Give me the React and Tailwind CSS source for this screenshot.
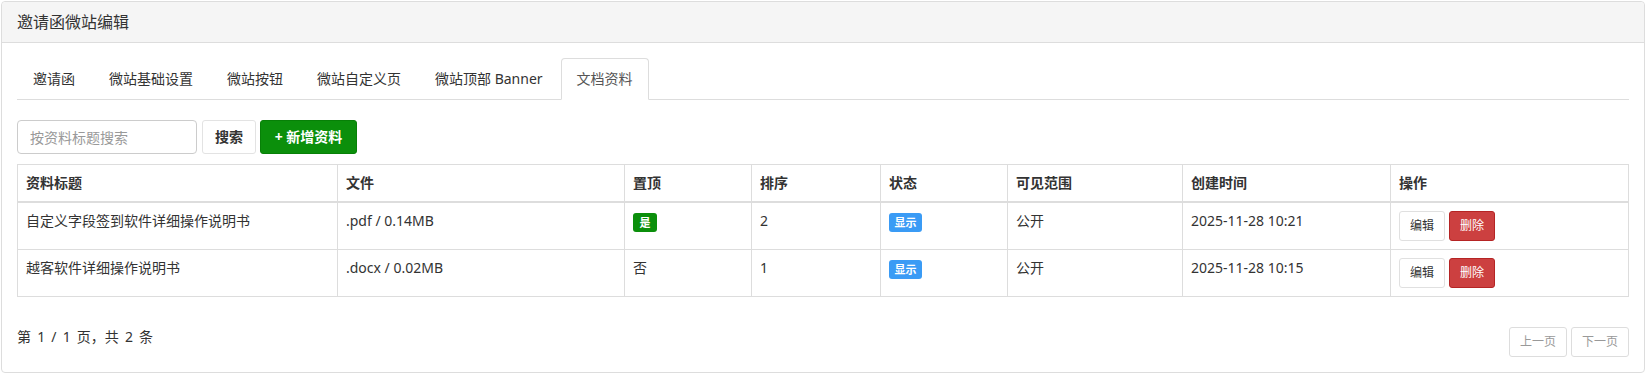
export default function App() {
  const tabs = ["邀请函", "微站基础设置", "微站按钮", "微站自定义页", "微站顶部 Banner", "文档资料"];
  const rows = [
    { title: "自定义字段签到软件详细操作说明书", file: ".pdf / 0.14MB", top: true, order: "2", scope: "公开", time: "2025-11-28 10:21" },
    { title: "越客软件详细操作说明书", file: ".docx / 0.02MB", top: false, order: "1", scope: "公开", time: "2025-11-28 10:15" },
  ];
  const heads = ["资料标题", "文件", "置顶", "排序", "状态", "可见范围", "创建时间", "操作"];
  const td = "border border-[#dddddd] p-2 align-top leading-5";
  return (
    <div className="pl-px pt-px bg-white font-['Noto_Sans','Noto_Sans_CJK_SC',sans-serif] text-sm text-[#333333]">
      <div className="w-[1644px] border border-[#dddddd] rounded bg-white">
        <div className="bg-[#f5f5f5] border-b border-[#dddddd] px-[15px] py-[10px] rounded-t">
          <h3 className="text-base leading-5 text-[#333333]">邀请函微站编辑</h3>
        </div>
        <div className="p-[15px]">
          <ul className="flex border-b border-[#dddddd]">
            {tabs.map((t, i) => (
              <li key={t} className="-mb-px mr-[2px]">
                <a
                  className={
                    i === tabs.length - 1
                      ? "block px-[15px] py-[10px] leading-5 border border-[#dddddd] border-b-transparent rounded-t bg-white text-[#555555]"
                      : "block px-[15px] py-[10px] leading-5 border border-transparent rounded-t text-[#333333]"
                  }
                >
                  {t}
                </a>
              </li>
            ))}
          </ul>

          <div className="mt-5 flex items-center">
            <input
              className="w-[180px] h-[34px] px-3 border border-[#cccccc] rounded text-sm placeholder:text-[#999999] outline-none"
              placeholder="按资料标题搜索"
            />
            <button className="ml-[5px] h-[34px] w-[54px] border border-[#e3e3e3] rounded-[3px] bg-white text-[#333333] font-bold leading-5">
              搜索
            </button>
            <button className="ml-1 h-[34px] w-[97px] border border-[#078007] rounded-[3px] bg-[#0b8f0b] text-white font-bold leading-5">
              + 新增资料
            </button>
          </div>

          <table className="mt-[10px] w-full table-fixed border-collapse">
            <colgroup>
              <col className="w-[320px]" />
              <col className="w-[287px]" />
              <col className="w-[127px]" />
              <col className="w-[129px]" />
              <col className="w-[127px]" />
              <col className="w-[175px]" />
              <col className="w-[208px]" />
              <col />
            </colgroup>
            <thead>
              <tr>
                {heads.map((h) => (
                  <th key={h} className="border border-[#dddddd] border-b-2 p-2 text-left font-bold leading-5 align-bottom">
                    {h}
                  </th>
                ))}
              </tr>
            </thead>
            <tbody>
              {rows.map((r) => (
                <tr key={r.title}>
                  <td className={td}>{r.title}</td>
                  <td className={td}>{r.file}</td>
                  <td className={td}>
                    {r.top ? (
                      <span className="inline-block align-top mt-[2px] w-6 text-center py-1 leading-[11px] text-[11px] font-bold text-white bg-[#0b8f0b] rounded-[3px]">
                        是
                      </span>
                    ) : (
                      "否"
                    )}
                  </td>
                  <td className={td}>{r.order}</td>
                  <td className={td}>
                    <span className="inline-block align-top mt-[2px] w-[33px] text-center py-1 leading-[11px] text-[11px] font-bold text-white bg-[#3a9bf5] rounded-[3px]">
                      显示
                    </span>
                  </td>
                  <td className={td}>{r.scope}</td>
                  <td className={td}>{r.time}</td>
                  <td className={td}>
                    <div className="flex gap-1">
                      <button className="h-[30px] px-[10px] text-xs leading-[18px] border border-[#e0e0e0] rounded-[3px] bg-white text-[#333333]">
                        编辑
                      </button>
                      <button className="h-[30px] px-[10px] text-xs leading-[18px] border border-[#b52424] rounded-[3px] bg-[#cc4040] text-white">
                        删除
                      </button>
                    </div>
                  </td>
                </tr>
              ))}
            </tbody>
          </table>

          <div className="mt-[30px] flex justify-between items-start">
            <div className="leading-5 text-[#333333] [word-spacing:2.5px]">第 1 / 1 页，共 2 条</div>
            <div className="flex gap-1">
              <button className="h-[30px] px-[10px] text-xs leading-[18px] border border-[#dddddd] rounded-[3px] bg-white text-[#999999]">
                上一页
              </button>
              <button className="h-[30px] px-[10px] text-xs leading-[18px] border border-[#dddddd] rounded-[3px] bg-white text-[#999999]">
                下一页
              </button>
            </div>
          </div>
        </div>
      </div>
    </div>
  );
}
